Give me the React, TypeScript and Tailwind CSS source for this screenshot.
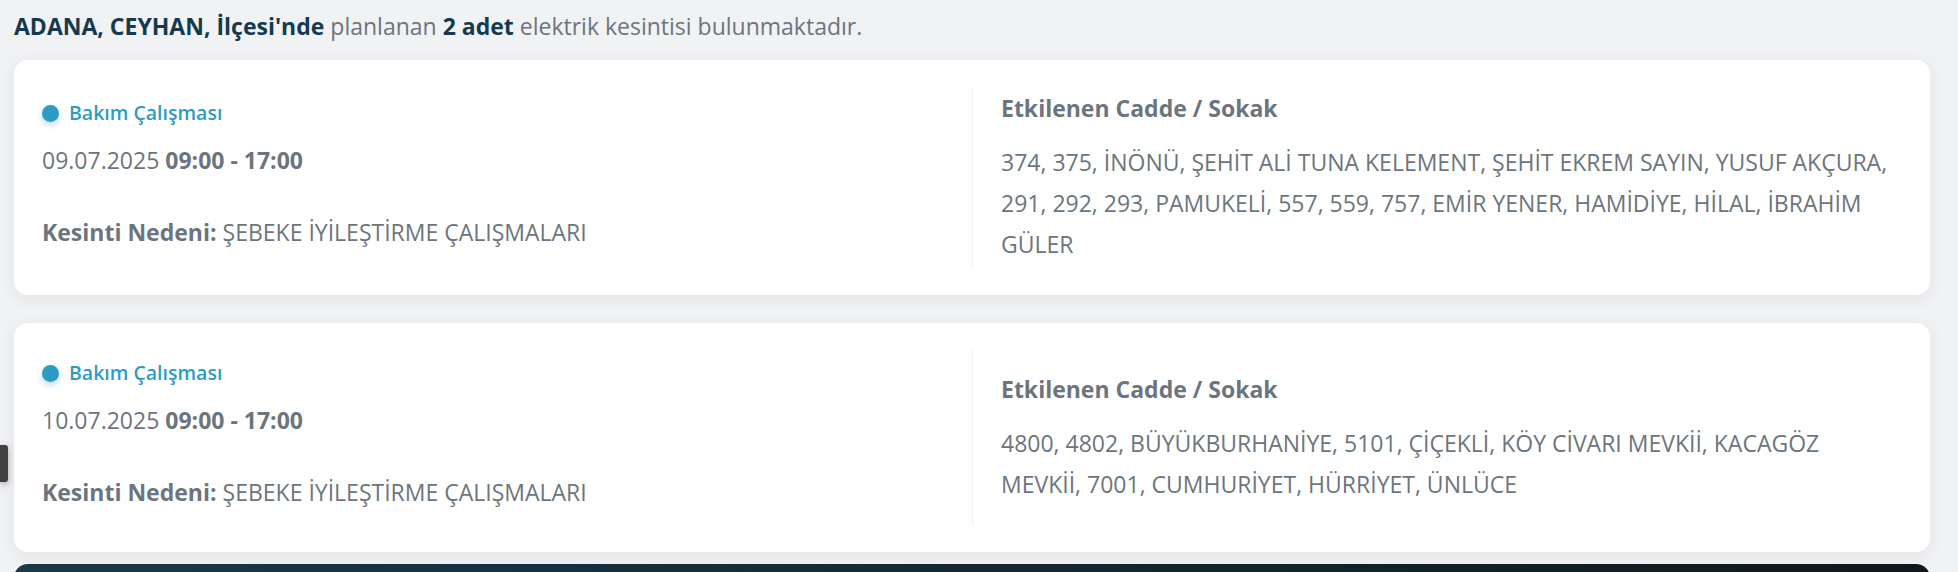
const outages = [
	{
		type: 'Bakım Çalışması',
		date: '09.07.2025',
		hours: '09:00 - 17:00',
		reason: 'ŞEBEKE İYİLEŞTİRME ÇALIŞMALARI',
		streets:
			'374, 375, İNÖNÜ, ŞEHİT ALİ TUNA KELEMENT, ŞEHİT EKREM SAYIN, YUSUF AKÇURA, 291, 292, 293, PAMUKELİ, 557, 559, 757, EMİR YENER, HAMİDİYE, HİLAL, İBRAHİM GÜLER',
	},
	{
		type: 'Bakım Çalışması',
		date: '10.07.2025',
		hours: '09:00 - 17:00',
		reason: 'ŞEBEKE İYİLEŞTİRME ÇALIŞMALARI',
		streets:
			'4800, 4802, BÜYÜKBURHANİYE, 5101, ÇİÇEKLİ, KÖY CİVARI MEVKİİ, KACAGÖZ MEVKİİ, 7001, CUMHURİYET, HÜRRİYET, ÜNLÜCE',
	},
];

type Outage = (typeof outages)[number];

function OutageCard({ item }: { item: Outage }) {
	return (
		<div className="grid grid-cols-2 rounded-[14px] bg-white px-[28px] py-[27px] shadow-[0_4px_18px_rgba(30,40,60,0.07)]">
			<div className="flex flex-col justify-center pb-[10px]">
				<div className="flex h-[28px] items-center gap-[10px] pt-[3px]">
					<span className="h-[17px] w-[17px] rounded-full bg-[#2d9cc4] shadow-[0_3px_6px_rgba(45,156,196,0.35)]" />
					<span className="text-[19.5px] font-semibold leading-[28px] text-[#2d9cc4]">
						{item.type}
					</span>
				</div>
				<p className="mt-[18px] leading-[32px]">
					{item.date} <b className="font-bold">{item.hours}</b>
				</p>
				<p className="mt-[40px] leading-[32px]">
					<b className="font-bold">Kesinti Nedeni:</b> {item.reason}
				</p>
			</div>
			<div className="flex min-h-[175px] flex-col justify-center border-l border-[#f0f1f3] pb-[3px] pl-[28px] pt-[5px]">
				<h3 className="font-bold leading-[32px]">Etkilenen Cadde / Sokak</h3>
				<p className="mt-[18px] leading-[41px]">{item.streets}</p>
			</div>
		</div>
	);
}

export default function App() {
	return (
		<div
			className="relative h-[572px] overflow-hidden bg-[#f1f2f4] pl-[14px] pr-[28px] text-[23px] text-[#6c757d]"
			style={{ fontFamily: '"Open Sans", "Noto Sans", sans-serif' }}
		>
			<p className="pb-[18px] pt-[10px] leading-[32px]">
				<b className="font-bold text-[#153a4d]">ADANA, CEYHAN, İlçesi'nde</b> planlanan{' '}
				<b className="font-bold text-[#153a4d]">2 adet</b> elektrik kesintisi bulunmaktadır.
			</p>
			<div className="flex flex-col gap-[28px]">
				{outages.map((o) => (
					<OutageCard key={o.date} item={o} />
				))}
			</div>
			<div className="mt-[12px] h-[40px] rounded-t-[14px] bg-linear-to-r from-[#1a3a48] to-[#10181e]" />
			<div className="absolute left-0 top-[445px] h-[37px] w-[8px] rounded-r-[3px] bg-[#404040] shadow-[0_2px_6px_rgba(0,0,0,0.3)]" />
		</div>
	);
}
